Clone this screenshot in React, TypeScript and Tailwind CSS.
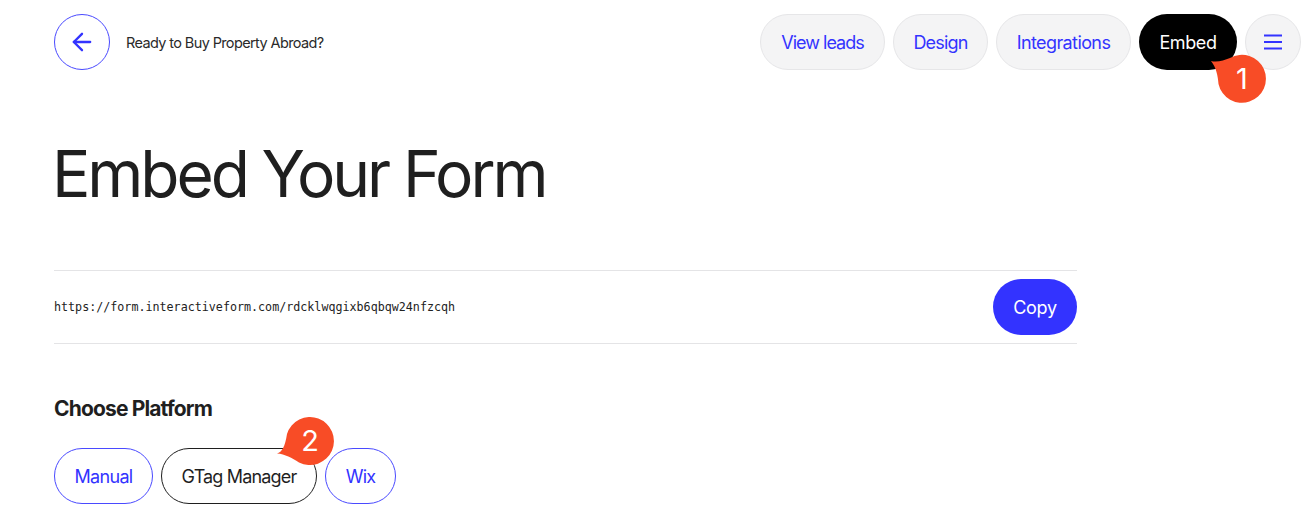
import { ArrowLeft } from 'lucide-react';

const sans = "font-['Inter',sans-serif]";

function NavButton({ label, className }: { label: string; className: string }) {
  return (
    <button className={`h-[56px] rounded-full bg-[#f4f4f5] border border-[#e6e6e8] pt-[1px] text-[18px] text-[#3333ff] ${className}`}>
      {label}
    </button>
  );
}

export default function App() {
  return (
    <div className={`relative w-[1311px] h-[526px] overflow-hidden bg-white ${sans} text-[#1f1f1f]`}>
      <header className="flex items-center justify-between pl-[54px] pr-[10px] pt-[14px]">
        <div className="flex items-center gap-[16px]">
          <button className="flex items-center justify-center w-[56px] h-[56px] rounded-full border-[1.5px] border-[#4a4aff] text-[#3333ff]">
            <ArrowLeft size={28} strokeWidth={2} />
          </button>
          <span className="pt-[1px] text-[14.5px] tracking-[-0.62px] text-[#2a2a2a]">Ready to Buy Property Abroad?</span>
        </div>
        <nav className="flex items-center gap-[8px]">
          <NavButton label="View leads" className="w-[125px] tracking-[-1px]" />
          <NavButton label="Design" className="w-[95px] tracking-[-0.8px]" />
          <NavButton label="Integrations" className="w-[135px] tracking-[-0.6px]" />
          <button className="h-[56px] w-[98px] rounded-full bg-black pt-[1px] text-[18px] tracking-[-0.4px] text-white">Embed</button>
          <button className="flex items-center justify-center w-[56px] h-[56px] rounded-full bg-[#f4f4f5] border border-[#e6e6e8]">
            <svg width="18" height="16" viewBox="0 0 18 16" fill="none" stroke="#3333ff" strokeWidth="2">
              <path d="M0 1.5h18M0 8h18M0 14.5h18" />
            </svg>
          </button>
        </nav>
      </header>

      <main className="w-[1077px] pl-[54px]">
        <h1 className="mt-[64px] -ml-[2px] text-[64px] leading-[80px] font-normal tracking-[-3.1px] text-[#1f1f1f]">Embed Your Form</h1>

        <div className="mt-[56px] flex items-center justify-between h-[74px] border-y border-[#e4e4e6]">
          <span className="pt-[2px] font-['DejaVu_Sans_Mono',monospace] text-[11.7px] text-[#222]">https://form.interactiveform.com/rdcklwqgixb6qbqw24nfzcqh</span>
          <button className="h-[56px] w-[84px] rounded-full bg-[#3333ff] pt-[1px] text-[18px] tracking-[-0.25px] text-white">Copy</button>
        </div>

        <h2 className="mt-[52px] text-[21px] leading-[26px] font-bold tracking-[-0.85px] text-[#1f1f1f]">Choose Platform</h2>

        <div className="mt-[26px] flex items-center gap-[8px]">
          <button className="h-[56px] w-[99px] rounded-full border-[1.5px] border-[#4a4aff] pt-[1px] text-[18px] tracking-[-0.67px] text-[#3333ff]">Manual</button>
          <button className="h-[56px] w-[156px] rounded-full border-[1.5px] border-[#1f1f1f] pt-[1px] text-[18px] tracking-[-0.83px] text-[#1f1f1f]">GTag Manager</button>
          <button className="h-[56px] w-[71px] rounded-full border-[1.5px] border-[#4a4aff] pt-[1px] text-[18px] tracking-[-0.8px] text-[#3333ff]">Wix</button>
        </div>
      </main>

      {/* callouts sit over the buttons */}
      <div className="absolute left-[1209px] top-[54px] w-[60px] h-[60px]">
        <svg width="60" height="60" viewBox="0 0 60 60" className="absolute inset-0 overflow-visible">
          <path d="M2 7 C8 8.5 15 6.5 21 4 A24 24 0 1 1 9.5 30 C9 22 7 13 2 7 Z" fill="#f84c26" />
        </svg>
        <span className="absolute left-[33px] top-[10px] -translate-x-1/2 text-[29px] leading-[30px] text-white">1</span>
      </div>
      <div className="absolute left-[272px] top-[410px] w-[60px] h-[60px]">
        <svg width="60" height="60" viewBox="0 0 60 60" className="absolute inset-0 overflow-visible">
          <path d="M5 43.5 C10 42 13 37 15 24 A24 24 0 1 1 27 52.4 C20 48 13 44 5 43.5 Z" fill="#f84c26" />
        </svg>
        <span className="absolute left-[38px] top-[16px] -translate-x-1/2 text-[29px] leading-[30px] text-white">2</span>
      </div>
    </div>
  );
}
